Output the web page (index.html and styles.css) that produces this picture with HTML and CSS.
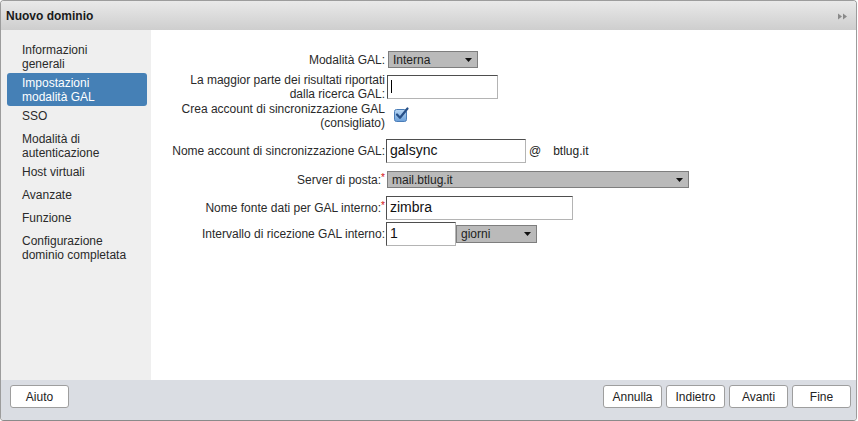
FILE: index.html
```html
<!DOCTYPE html>
<html lang="it">
<head>
<meta charset="utf-8">
<title>Nuovo dominio</title>
<link rel="stylesheet" href="styles.css">
</head>
<body>
<div class="dialog">
  <div class="titlebar">
    <span class="title">Nuovo dominio</span>
    <svg class="collapse" width="10" height="7" viewBox="0 0 10 7"><path d="M0 0.5 L4 3.5 L0 6.5 Z M5 0.5 L9 3.5 L5 6.5 Z" fill="#8a8a8a"/></svg>
  </div>
  <div class="body">
    <ul class="steps">
      <li class="step">Informazioni generali</li>
      <li class="step step-active">Impostazioni modalità GAL</li>
      <li class="step">SSO</li>
      <li class="step">Modalità di autenticazione</li>
      <li class="step">Host virtuali</li>
      <li class="step">Avanzate</li>
      <li class="step">Funzione</li>
      <li class="step">Configurazione dominio completata</li>
    </ul>
    <div class="form">
      <div class="row row-1">
        <div class="label">Modalità GAL:</div>
        <div class="select select-mode"><span>Interna</span><svg class="arrow" width="7" height="4" viewBox="0 0 7 4"><path d="M0 0 H7 L3.5 4 Z" fill="#111"/></svg></div>
      </div>
      <div class="row row-2">
        <div class="label">La maggior parte dei risultati riportati dalla ricerca GAL:</div>
        <div class="textbox textbox-max"><span class="caret"></span></div>
      </div>
      <div class="row row-3">
        <div class="label">Crea account di sincronizzazione GAL (consigliato)</div>
        <svg class="checkbox" width="15" height="15" viewBox="0 0 15 15">
          <defs>
            <linearGradient id="cb" x1="0" y1="0" x2="0" y2="1">
              <stop offset="0" stop-color="#b9d7f4"/>
              <stop offset="1" stop-color="#6a9fd8"/>
            </linearGradient>
          </defs>
          <rect x="0.5" y="2.5" width="12" height="12" rx="2" fill="url(#cb)" stroke="#4a7db8"/>
          <path d="M3 7.5 L6 10.8 L13.5 1.5" fill="none" stroke="#274f86" stroke-width="2.2" stroke-linecap="round" stroke-linejoin="round"/>
        </svg>
      </div>
      <div class="row row-4">
        <div class="label">Nome account di sincronizzazione GAL:</div>
        <div class="textbox textbox-account">galsync</div>
        <span class="at">@</span>
        <span class="domain">btlug.it</span>
      </div>
      <div class="row row-5">
        <div class="label">Server di posta:<span class="req">*</span></div>
        <div class="select select-server"><span>mail.btlug.it</span><svg class="arrow" width="7" height="4" viewBox="0 0 7 4"><path d="M0 0 H7 L3.5 4 Z" fill="#111"/></svg></div>
      </div>
      <div class="row row-6">
        <div class="label">Nome fonte dati per GAL interno:<span class="req">*</span></div>
        <div class="textbox textbox-source">zimbra</div>
      </div>
      <div class="row row-7">
        <div class="label">Intervallo di ricezione GAL interno:</div>
        <div class="textbox textbox-interval">1</div>
        <div class="select select-unit"><span>giorni</span><svg class="arrow" width="7" height="4" viewBox="0 0 7 4"><path d="M0 0 H7 L3.5 4 Z" fill="#111"/></svg></div>
      </div>
    </div>
  </div>
  <div class="footer">
    <button class="btn">Aiuto</button>
    <div class="btn-group">
      <button class="btn">Annulla</button>
      <button class="btn">Indietro</button>
      <button class="btn">Avanti</button>
      <button class="btn">Fine</button>
    </div>
  </div>
</div>
</body>
</html>
```

FILE: styles.css
```css
* { box-sizing: border-box; }

html, body {
  margin: 0;
  padding: 0;
  background: #ffffff;
}

body {
  font-family: "Liberation Sans", Arial, sans-serif;
  font-size: 12px;
  color: #222;
}

.dialog {
  width: 857px;
  height: 421px;
  border: 1px solid #9c9c9c;
  border-bottom-color: #8a8a8a;
  border-radius: 4px;
  overflow: hidden;
  display: flex;
  flex-direction: column;
}

.titlebar {
  height: 29px;
  flex: none;
  display: flex;
  align-items: center;
  justify-content: space-between;
  padding: 0 8px 0 5px;
  background: linear-gradient(#e9e9e9, #cecece);
}

.title {
  font-weight: bold;
  font-size: 12px;
  color: #1a1a1a;
}

.collapse { display: block; margin-top: 1px; }

.body {
  height: 350px;
  flex: none;
  display: flex;
}

.steps {
  width: 150px;
  flex: none;
  margin: 0;
  padding: 10px 0 0 0;
  list-style: none;
  background: #efefef;
}

.step {
  margin: 0 4px 0 6px;
  padding: 3px 20px 2px 15px;
  min-height: 23px;
  line-height: 14px;
  font-size: 12px;
  color: #2a2a2a;
}

.step-active {
  background: #4580b6;
  color: #ffffff;
  border-radius: 3px;
}

.form {
  flex: 1;
  background: #ffffff;
  padding: 0 0 0 14px;
}

.row {
  display: flex;
  align-items: center;
}

.row-1 { margin-top: 21px; }
.row-2 { margin-top: 5px; }
.row-3 { margin-top: 1px; }
.row-4 { margin-top: 9px; }
.row-5 { margin-top: 8px; }
.row-6 { margin-top: 8px; }
.row-7 { margin-top: 2px; }

.label {
  width: 220px;
  flex: none;
  text-align: right;
  line-height: 14px;
  color: #2a2a2a;
  margin-right: 1px;
}

.req {
  color: #d01010;
  font-size: 10px;
  vertical-align: top;
  line-height: 10px;
}

.select {
  height: 17px;
  display: flex;
  align-items: center;
  justify-content: space-between;
  padding: 0 5px 0 4px;
  margin-left: 1px;
  background: #bababa;
  border: 1px solid #7e7e7e;
  color: #222;
  font-size: 12px;
  line-height: 14px;
}

.select .arrow { display: block; }

.select-mode { width: 90px; margin-left: 2px; }
.select-server { width: 302px; }
.select-unit { width: 81px; height: 18px; margin-left: 0; }

.textbox {
  height: 24px;
  border: 1px solid;
  border-color: #4e4e4e #b4b4b4 #b4b4b4 #4e4e4e;
  background: #ffffff;
  font-size: 14px;
  line-height: 20px;
  padding: 0 3px;
  color: #111;
  display: flex;
  align-items: flex-start;
}

.textbox-max { width: 111px; margin-left: 1px; padding-left: 3px; }
.textbox-account { width: 140px; }
.textbox-source { width: 187px; }
.textbox-interval { width: 70px; }

.caret {
  display: block;
  width: 1px;
  height: 13px;
  margin-top: 4px;
  background: #000;
}

.checkbox {
  display: block;
  margin-left: 8px;
  margin-top: -4px;
}

.at {
  margin-left: 3px;
  font-size: 12px;
  color: #222;
}

.domain {
  margin-left: 12px;
  font-size: 12px;
  color: #222;
}

.footer {
  flex: 1;
  display: flex;
  justify-content: space-between;
  align-items: flex-start;
  padding: 5px 5px 0 9px;
  background: #dadde3;
}

.btn-group {
  display: flex;
  gap: 4px;
}

.btn {
  width: 59px;
  height: 23px;
  padding: 0;
  background: #ffffff;
  border: 1px solid #9e9e9e;
  border-radius: 3px;
  font-family: "Liberation Sans", Arial, sans-serif;
  font-size: 12px;
  color: #222;
}
```
